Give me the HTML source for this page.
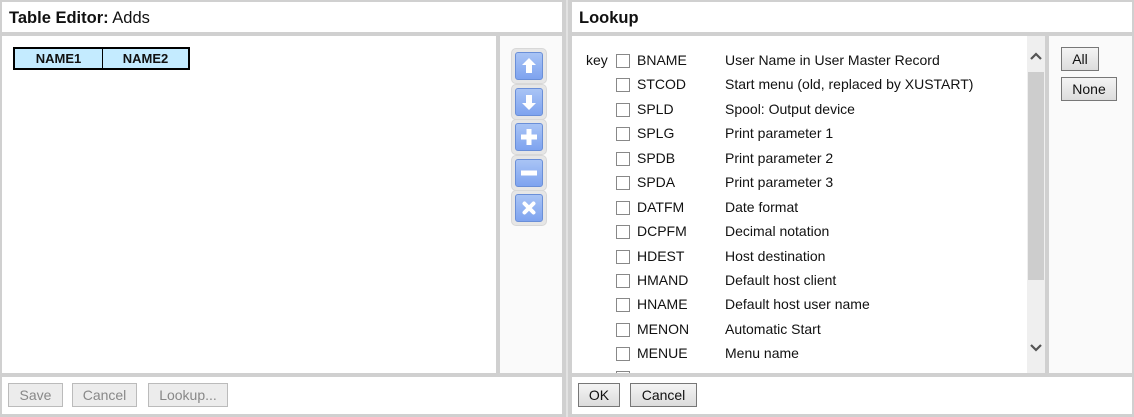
<!DOCTYPE html>
<html><head><style>
*{margin:0;padding:0;box-sizing:border-box}
body{width:1134px;height:417px;background:#d0d0d0;font-family:"Liberation Sans",Arial,sans-serif;position:relative;overflow:hidden;color:#111}
.a{position:absolute}
.w{background:#fff}
.g{background:#fafafa}
.hd{font-size:16.5px;padding:7px 0 0 7px}
.btn{position:absolute;height:24px;border:1px solid #777;background:linear-gradient(#f4f4f4,#dcdcdc);font-size:14px;text-align:center;line-height:22px;color:#111}
.dis{border-color:#bbb;color:#888;background:#ececec}
.pad{position:absolute;left:511px;width:36px;height:36px;border-radius:5px;background:#e6e6e6;border:1px solid #d8d8d8}
.ic{position:absolute;left:3px;top:3px;width:28px;height:28px;border-radius:3px;background:linear-gradient(#a9c4f5,#7ea3ef);border:1px solid #6a8fd8}
.row{position:absolute;left:0;font-size:14px;height:20px;line-height:20px}
.cb{position:absolute;left:616px;width:14px;height:14px;border:1px solid #888;background:#fff}
</style></head><body>
<div class="a w hd" style="left:2px;top:2px;width:560px;height:30px"><b>Table Editor:</b> Adds</div>
<div class="a w" style="left:2px;top:36px;width:494px;height:337px"></div>
<div class="a" style="left:13px;top:47px;width:177px;height:23px;border:2px solid #000;background:#c4ebff;font-size:13px;font-weight:bold;display:flex">
<div style="width:88px;text-align:center;line-height:19px;border-right:1px solid #000">NAME1</div>
<div style="flex:1;text-align:center;line-height:19px">NAME2</div></div>
<div class="a g" style="left:500px;top:36px;width:62px;height:337px"></div>
<div class="pad" style="top:48px"><div class="ic"><svg width="26" height="26" viewBox="0 0 26 26"><path d="M13 5 L20 12 H16 V20 H10 V12 H6 Z" fill="#fff"/></svg></div></div>
<div class="pad" style="top:84px"><div class="ic"><svg width="26" height="26" viewBox="0 0 26 26"><path d="M13 21 L20 14 H16 V6 H10 V14 H6 Z" fill="#fff"/></svg></div></div>
<div class="pad" style="top:119px"><div class="ic"><svg width="26" height="26" viewBox="0 0 26 26"><path d="M10.5 5h5v5.5H21v5h-5.5V21h-5v-5.5H5v-5h5.5z" fill="#fff"/></svg></div></div>
<div class="pad" style="top:155px"><div class="ic"><svg width="26" height="26" viewBox="0 0 26 26"><rect x="5" y="10.5" width="16" height="5" fill="#fff"/></svg></div></div>
<div class="pad" style="top:190px"><div class="ic"><svg width="26" height="26" viewBox="0 0 26 26"><path d="M8.5 8.5l9 9M17.5 8.5l-9 9" stroke="#fff" stroke-width="4" stroke-linecap="round"/></svg></div></div>
<div class="a w" style="left:2px;top:377px;width:560px;height:37px"></div>
<div class="btn dis" style="left:8px;top:383px;width:55px">Save</div>
<div class="btn dis" style="left:72px;top:383px;width:65px">Cancel</div>
<div class="btn dis" style="left:148px;top:383px;width:80px">Lookup...</div>
<div class="a" style="left:566px;top:0;width:2px;height:417px;background:#e2e2e2"></div>
<div class="a w hd" style="left:572px;top:2px;width:560px;height:30px"><b>Lookup</b></div>
<div class="a w" style="left:572px;top:36px;width:473px;height:337px;overflow:hidden">
<div style="position:absolute;left:-572px;top:-36px;width:1200px;height:420px">
<div class="row" style="left:586px;top:50px">key</div>
<div class="cb" style="top:54px"></div><div class="row" style="left:637px;top:50px">BNAME</div><div class="row" style="left:725px;top:50px">User Name in User Master Record</div>
<div class="cb" style="top:78px"></div><div class="row" style="left:637px;top:74px">STCOD</div><div class="row" style="left:725px;top:74px">Start menu (old, replaced by XUSTART)</div>
<div class="cb" style="top:103px"></div><div class="row" style="left:637px;top:99px">SPLD</div><div class="row" style="left:725px;top:99px">Spool: Output device</div>
<div class="cb" style="top:127px"></div><div class="row" style="left:637px;top:123px">SPLG</div><div class="row" style="left:725px;top:123px">Print parameter 1</div>
<div class="cb" style="top:152px"></div><div class="row" style="left:637px;top:148px">SPDB</div><div class="row" style="left:725px;top:148px">Print parameter 2</div>
<div class="cb" style="top:176px"></div><div class="row" style="left:637px;top:172px">SPDA</div><div class="row" style="left:725px;top:172px">Print parameter 3</div>
<div class="cb" style="top:201px"></div><div class="row" style="left:637px;top:197px">DATFM</div><div class="row" style="left:725px;top:197px">Date format</div>
<div class="cb" style="top:225px"></div><div class="row" style="left:637px;top:221px">DCPFM</div><div class="row" style="left:725px;top:221px">Decimal notation</div>
<div class="cb" style="top:250px"></div><div class="row" style="left:637px;top:246px">HDEST</div><div class="row" style="left:725px;top:246px">Host destination</div>
<div class="cb" style="top:274px"></div><div class="row" style="left:637px;top:270px">HMAND</div><div class="row" style="left:725px;top:270px">Default host client</div>
<div class="cb" style="top:298px"></div><div class="row" style="left:637px;top:294px">HNAME</div><div class="row" style="left:725px;top:294px">Default host user name</div>
<div class="cb" style="top:323px"></div><div class="row" style="left:637px;top:319px">MENON</div><div class="row" style="left:725px;top:319px">Automatic Start</div>
<div class="cb" style="top:347px"></div><div class="row" style="left:637px;top:343px">MENUE</div><div class="row" style="left:725px;top:343px">Menu name</div>
<div class="cb" style="top:371px"></div>
</div>
<div class="a" style="left:455px;top:0;width:18px;height:337px;background:#efefef">
<div class="a" style="left:1px;top:36px;width:16px;height:208px;background:#cdcdcd"></div>
<svg class="a" style="left:3px;top:16px" width="12" height="8" viewBox="0 0 12 8"><path d="M1 7L6 2l5 5" stroke="#555" stroke-width="2.2" fill="none"/></svg>
<svg class="a" style="left:3px;top:308px" width="12" height="8" viewBox="0 0 12 8"><path d="M1 1l5 5 5-5" stroke="#555" stroke-width="2.2" fill="none"/></svg>
</div>
</div>
<div class="a g" style="left:1049px;top:36px;width:83px;height:337px"></div>
<div class="btn" style="left:1061px;top:47px;width:38px">All</div>
<div class="btn" style="left:1061px;top:77px;width:56px">None</div>
<div class="a w" style="left:572px;top:377px;width:560px;height:37px"></div>
<div class="btn" style="left:578px;top:383px;width:42px">OK</div>
<div class="btn" style="left:630px;top:383px;width:67px">Cancel</div>
</body></html>
